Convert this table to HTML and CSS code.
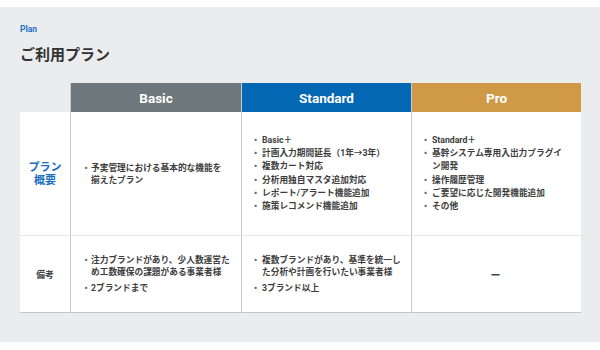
FILE: index.html
```html
<!DOCTYPE html>
<html lang="ja">
<head>
<meta charset="utf-8">
<title>ご利用プラン</title>
<link rel="stylesheet" href="styles.css">
</head>
<body>
<section class="panel">
  <p class="eyebrow">Plan</p>
  <h1 class="title">ご利用プラン</h1>
  <div class="plan-table">
    <div class="corner"></div>
    <div class="head head-basic">Basic</div>
    <div class="head head-standard">Standard</div>
    <div class="head head-pro">Pro</div>

    <div class="label label-main row1"><span>プラン<br>概要</span></div>
    <div class="cell row1 col-basic">
      <ul class="list list-tight">
        <li><span class="dot">・</span><span>予実管理における基本的な機能を<br>揃えたプラン</span></li>
      </ul>
    </div>
    <div class="cell row1 col-wide">
      <ul class="list list-loose">
        <li><span class="dot">・</span><span>Basic＋</span></li>
        <li><span class="dot">・</span><span>計画入力期間延長（1年→3年）</span></li>
        <li><span class="dot">・</span><span>複数カート対応</span></li>
        <li><span class="dot">・</span><span>分析用独自マスタ追加対応</span></li>
        <li><span class="dot">・</span><span>レポート/アラート機能追加</span></li>
        <li><span class="dot">・</span><span>施策レコメンド機能追加</span></li>
      </ul>
    </div>
    <div class="cell row1 col-wide">
      <ul class="list list-loose">
        <li><span class="dot">・</span><span>Standard＋</span></li>
        <li><span class="dot">・</span><span>基幹システム専用入出力プラグイ<br>ン開発</span></li>
        <li><span class="dot">・</span><span>操作履歴管理</span></li>
        <li><span class="dot">・</span><span>ご要望に応じた開発機能追加</span></li>
        <li><span class="dot">・</span><span>その他</span></li>
      </ul>
    </div>

    <div class="label label-sub row2"><span>備考</span></div>
    <div class="cell row2 col-basic">
      <ul class="list list-spaced">
        <li><span class="dot">・</span><span>注力ブランドがあり、少人数運営た<br>め工数確保の課題がある事業者様</span></li>
        <li><span class="dot">・</span><span>2ブランドまで</span></li>
      </ul>
    </div>
    <div class="cell row2 col-wide">
      <ul class="list list-spaced">
        <li><span class="dot">・</span><span>複数ブランドがあり、基準を統一し<br>た分析や計画を行いたい事業者様</span></li>
        <li><span class="dot">・</span><span>3ブランド以上</span></li>
      </ul>
    </div>
    <div class="cell row2 col-center"><span class="dash">ー</span></div>
  </div>
</section>
</body>
</html>
```

FILE: styles.css
```css
* {
  box-sizing: border-box;
}

html, body {
  margin: 0;
  padding: 0;
  background: #ffffff;
}

body {
  font-family: Roboto, "Noto Sans CJK JP", "Noto Sans", sans-serif;
  color: #333333;
  padding: 7px 0 8px;
}

.panel {
  background: #ebecee;
  height: 335px;
  padding: 16px 19px 0 20px;
}

.eyebrow {
  margin: 0;
  font-size: 8.5px;
  line-height: 12px;
  font-weight: 700;
  color: #1f72c2;
}

.title {
  margin: 9px 0 0;
  font-size: 15px;
  line-height: 22px;
  font-weight: 700;
  color: #333333;
  letter-spacing: 0;
}

.plan-table {
  margin-top: 17px;
  display: grid;
  grid-template-columns: 50px 171px 170px 170px;
  grid-template-rows: 29px 124px 77px;
}

.corner {
  background: transparent;
}

.head {
  display: flex;
  align-items: center;
  justify-content: center;
  color: #ffffff;
  font-size: 13.5px;
  font-weight: 700;
  border-left: 1px solid #c9cbcd;
}

.head-basic {
  background: #6e777c;
}

.head-standard {
  background: #0367b4;
}

.head-pro {
  background: #cf9947;
}

.label {
  background: #ffffff;
  display: flex;
  align-items: center;
  justify-content: center;
  text-align: center;
}

.label-main {
  color: #1a6ec0;
  font-size: 11px;
  line-height: 13px;
  font-weight: 700;
}

.label-sub {
  color: #444444;
  font-size: 8.8px;
  font-weight: 700;
}

.cell {
  background: #ffffff;
  border-left: 1px solid #c9cbcd;
  display: flex;
  align-items: center;
  font-size: 8.7px;
  font-weight: 700;
  color: #3d3d3d;
}

.row1 {
  border-bottom: 1px solid #e6e7e8;
}

.row2 {
  border-bottom: 1px solid #c3c5c7;
}

.col-basic {
  padding-left: 10px;
}

.col-basic .dot {
  width: 10px;
}

.col-wide {
  padding-left: 7px;
}

.col-wide .dot {
  width: 13px;
}

.col-center {
  justify-content: center;
}

.list {
  list-style: none;
  margin: 0;
  padding: 0;
}

.list li {
  display: flex;
  white-space: nowrap;
}

.dot {
  flex: none;
  display: inline-block;
  text-align: center;
  color: #666666;
}

.list-tight li {
  line-height: 12px;
}

.list-loose li {
  line-height: 13.2px;
}

.list-spaced li {
  line-height: 12px;
}

.list-spaced li + li {
  margin-top: 4.3px;
}

.dash {
  font-size: 10px;
  font-weight: 700;
  color: #444444;
  padding-right: 2px;
}
```
